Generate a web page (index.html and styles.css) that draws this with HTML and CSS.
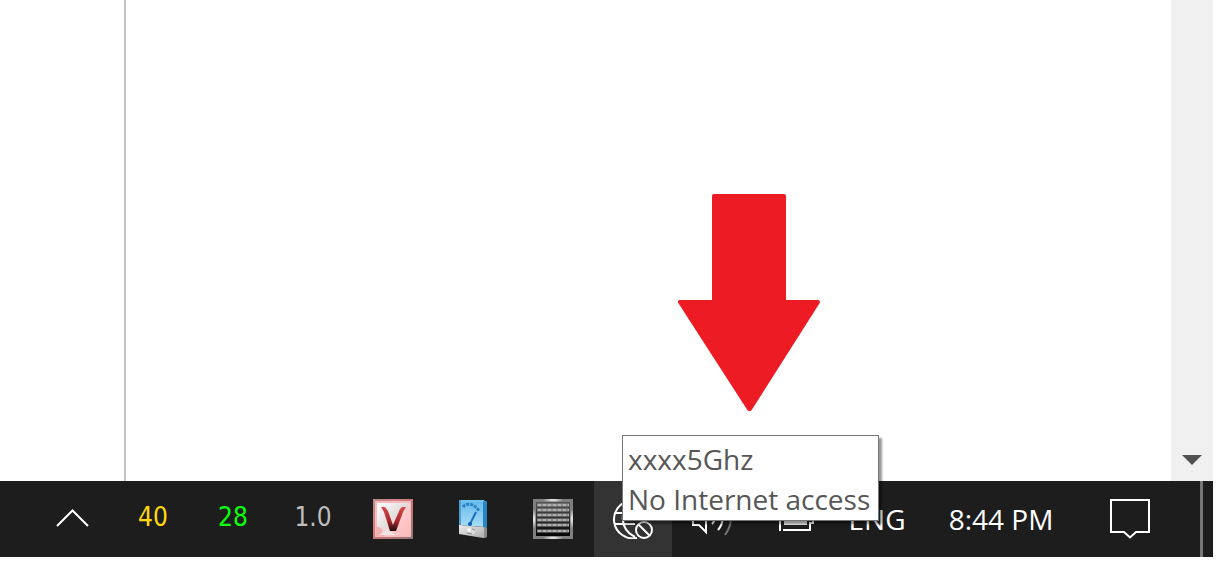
FILE: index.html
```
<!DOCTYPE html>
<html lang="en">
<head>
  <meta charset="UTF-8">
  <title>Desktop</title>
  <link rel="stylesheet" href="styles.css">
</head>
<body>
  <main class="window">
    <div class="side-pane"></div>
    <div class="document"></div>
    <div class="scrollbar">
      <button class="scroll-down" aria-label="Scroll down">
        <svg width="20" height="10" viewBox="0 0 20 10"><path d="M0 0h20L10 10z" fill="#505050"/></svg>
      </button>
    </div>
  </main>

  <footer class="taskbar">
    <button class="tray-item" aria-label="Show hidden icons">
      <svg width="34" height="20" viewBox="0 0 34 20"><path d="M1 17L16.500 1.500L32 17" fill="none" stroke="#fff" stroke-width="2"/></svg>
    </button>
    <button class="tray-item reading yellow">40</button>
    <button class="tray-item reading green">28</button>
    <button class="tray-item reading gray">1.0</button>

    <button class="tray-item" aria-label="Keyboard">
      <svg width="40" height="40" viewBox="0 0 40 40">
        <defs>
          <linearGradient id="v-frame" x1="0" y1="0" x2="1" y2="1">
            <stop offset="0" stop-color="#b58c8c"/><stop offset=".3" stop-color="#d98080"/><stop offset=".6" stop-color="#c27474"/><stop offset="1" stop-color="#8f7777"/>
          </linearGradient>
          <linearGradient id="v-face" x1="0" y1="0" x2="1" y2="1">
            <stop offset="0" stop-color="#fff"/><stop offset=".45" stop-color="#e2dede"/><stop offset=".6" stop-color="#ffc9c9"/><stop offset="1" stop-color="#f9bcbc"/>
          </linearGradient>
          <linearGradient id="v-ink" x1="0" y1="0" x2="0" y2="1">
            <stop offset="0" stop-color="#d8494d"/><stop offset=".6" stop-color="#a8262d"/><stop offset="1" stop-color="#1c0c0c"/>
          </linearGradient>
        </defs>
        <path d="M0 0h40v40H0z" fill="url(#v-frame)"/>
        <path d="M2 2h36v36H2z" fill="#f4bcbc"/>
        <path d="M4 4h33v33H4z" fill="url(#v-face)"/>
        <path d="M3 37V27l5 2 4 8z" fill="#f3b0b0"/>
        <path d="M6 36l8-6 8 6z" fill="#eee4e4"/>
        <path d="M8 8h4l3 4 5 14 7-16 2-2h4l-3 5-7 19h-6L11 13z" fill="url(#v-ink)"/>
      </svg>
    </button>

    <button class="tray-item" aria-label="Performance gauge">
      <svg width="30" height="40" viewBox="0 0 30 40">
        <defs>
          <linearGradient id="gauge-face" x1="0" y1="0" x2="0" y2="1">
            <stop offset="0" stop-color="#62b8ea"/><stop offset="1" stop-color="#a9ddf7"/>
          </linearGradient>
          <linearGradient id="gauge-base" x1="0" y1="0" x2="1" y2="1">
            <stop offset="0" stop-color="#ececec"/><stop offset="1" stop-color="#a9a9a9"/>
          </linearGradient>
        </defs>
        <path d="M1 1h25v27L1 26z" fill="url(#gauge-face)"/>
        <path d="M1 1h24l4 2H5z" fill="#6fc4ef"/>
        <path d="M1 1h2v25H1z" fill="#4c9fce"/>
        <path d="M25 2l4 1v26l-4-1z" fill="#2586c4"/>
        <path d="M1 26l24 2 4 1v9l-4 1L1 35z" fill="url(#gauge-base)"/>
        <path d="M26 28l3 1v9l-3 1z" fill="#8c8c8c"/>
        <path d="M5 8c4-5 12-3 16 4" fill="none" stroke="#2b83c7" stroke-width="3" stroke-dasharray="3 1"/>
        <path d="M12 25l6-12" stroke="#1c70bd" stroke-width="2"/>
        <circle cx="12" cy="25" r="2" fill="#0b5dad"/>
        <circle cx="11" cy="31" r="2" fill="#fafafa"/><circle cx="15" cy="33" r="2" fill="#dedede"/>
        <path d="M9 34l5 1m0-5l3 1" stroke="#8b8b8b"/>
      </svg>
    </button>

    <button class="tray-item" aria-label="Activity monitor">
      <svg width="40" height="40" viewBox="0 0 40 40">
        <defs>
          <radialGradient id="grid-shine"><stop offset="0" stop-color="#fff"/><stop offset="1" stop-color="#fff" stop-opacity="0"/></radialGradient>
          <linearGradient id="grid-fill" x1="0" y1="0" x2="0" y2="1"><stop offset="0" stop-color="#555"/><stop offset="1" stop-color="#050505"/></linearGradient>
        </defs>
        <path d="M0 0h40v40H0z" fill="#808080"/>
        <path d="M3 3h34v34H3z" fill="url(#grid-fill)"/>
        <ellipse cx="20" cy="1" rx="10" ry="2" fill="url(#grid-shine)"/>
        <ellipse cx="20" cy="39" rx="10" ry="2" fill="url(#grid-shine)"/>
        <ellipse cx="1" cy="20" rx="2" ry="10" fill="url(#grid-shine)"/>
        <ellipse cx="39" cy="20" rx="2" ry="10" fill="url(#grid-shine)"/>
        <path d="M4 6h32M4 11h32M4 16h32M4 21h32M4 26h32M4 32h32" stroke="#8c8c8c" stroke-width="3"/>
        <path d="M5 6h31M5 11h31M5 16h31M5 21h31M5 26h31M5 32h31" stroke="#b0b0b0" stroke-width="2" stroke-dasharray="3 2"/>
      </svg>
    </button>

    <div class="network">
      <button class="network-button" aria-label="Network" aria-describedby="network-tip">
        <svg width="40" height="40" viewBox="0 0 40 40" fill="none" stroke="#fff" stroke-width="2">
          <path d="M24 39A19 19 0 1 1 39 20M2 14h36M2 25h20M20 1c-14 9-14 29 2 37M20 1c6 5 9 11 9 18"/>
          <circle cx="31" cy="31" r="8"/>
          <path d="M25 25l12 12"/>
        </svg>
      </button>
      <div class="tooltip" id="network-tip" role="tooltip">
        <div>xxxx5Ghz</div>
        <div>No Internet access</div>
      </div>
      <svg class="arrow" width="142" height="218" viewBox="0 0 142 218"><path d="M36 2h70v106h34L72 215h-1L2 108h34z" fill="#ed1c24" stroke="#ed1c24" stroke-width="4" stroke-linejoin="round"/></svg>
    </div>

    <button class="tray-item" aria-label="Volume">
      <svg width="44" height="40" viewBox="0 0 44 40" fill="none" stroke="#fff" stroke-width="2">
        <path d="M3 13v13h6l7 7V6l-7 7z"/>
        <path d="M22 14q5 6 0 11M28 9q9 11 0 22"/>
        <path d="M34 4q13 15 1 32" stroke="#777"/>
      </svg>
    </button>
    <button class="tray-item" aria-label="Battery">
      <svg width="44" height="26" viewBox="0 0 44 26">
        <path d="M10 25V1h30v6h3v10h-3v7H13" fill="none" stroke="#fff" stroke-width="2"/>
        <path d="M14 5h23v14H14z" fill="#eee"/>
      </svg>
    </button>
    <button class="language">ENG</button>
    <button class="clock">8:44 PM</button>
    <button class="notifications" aria-label="Notifications">
      <svg width="40" height="40" viewBox="0 0 40 40"><path d="M1 1h38v32H26l-6 5.500L14 33H1z" fill="none" stroke="#fff" stroke-width="2"/></svg>
    </button>
    <button class="show-desktop" aria-label="Show desktop"></button>
  </footer>
</body>
</html>
```

FILE: styles.css
```
body {
  display: flex;
  flex-direction: column;
  box-sizing: border-box;
  min-height: 100vh;
  margin: 0;
  padding: 0 17px 16px 0;
  background-color: #fff;
  font-family: "Open Sans", "Noto Sans", sans-serif;
  font-size: 28px;
}

button {
  display: flex;
  align-items: center;
  justify-content: center;
  margin: 0;
  padding: 0;
  border: 0;
  background: none;
  color: #fff;
  font: inherit;
}

/* Window above the taskbar */
.window {
  display: flex;
  flex: 1;
}

.side-pane {
  width: 124px;
  border-right: 2px solid #c3c3c3;
}

.document {
  flex: 1;
}

.scrollbar {
  display: flex;
  align-items: flex-end;
  width: 42px;
  background-color: #f0f0f0;
}

.scroll-down {
  width: 42px;
  height: 42px;
}

/* Taskbar */
.taskbar {
  display: flex;
  justify-content: flex-end;
  height: 76px;
  background-color: #1d1d1d;
}

.tray-item {
  width: 80px;
}

.reading {
  padding-bottom: 4px;
  font-family: "DejaVu Sans Condensed", "DejaVu Sans", sans-serif;
  font-size: 26px;
}

.yellow {
  color: #ffd90f;
}

.green {
  color: #0cff0c;
}

.gray {
  color: #bdbdbd;
}

.network {
  position: relative;
  display: flex;
  width: 78px;
  margin-left: 1px;
  background-color: #333;
}

.network-button {
  flex: 1;
}

.tooltip {
  position: absolute;
  left: 28px;
  bottom: 36px;
  z-index: 1;
  padding: 3px 8px 1px 5px;
  border: 1px solid #767676;
  background-color: #fff;
  box-shadow: 3px 3px 2px rgba(0, 0, 0, 0.4);
  color: #575757;
  line-height: 40px;
  white-space: nowrap;
}

.arrow {
  position: absolute;
  left: 84px;
  bottom: 145px;
}

.language {
  width: 90px;
}

.clock {
  width: 158px;
}

.notifications {
  width: 100px;
  margin-right: 20px;
}

.show-desktop {
  width: 13px;
  border-left: 3px solid #777;
}
```
